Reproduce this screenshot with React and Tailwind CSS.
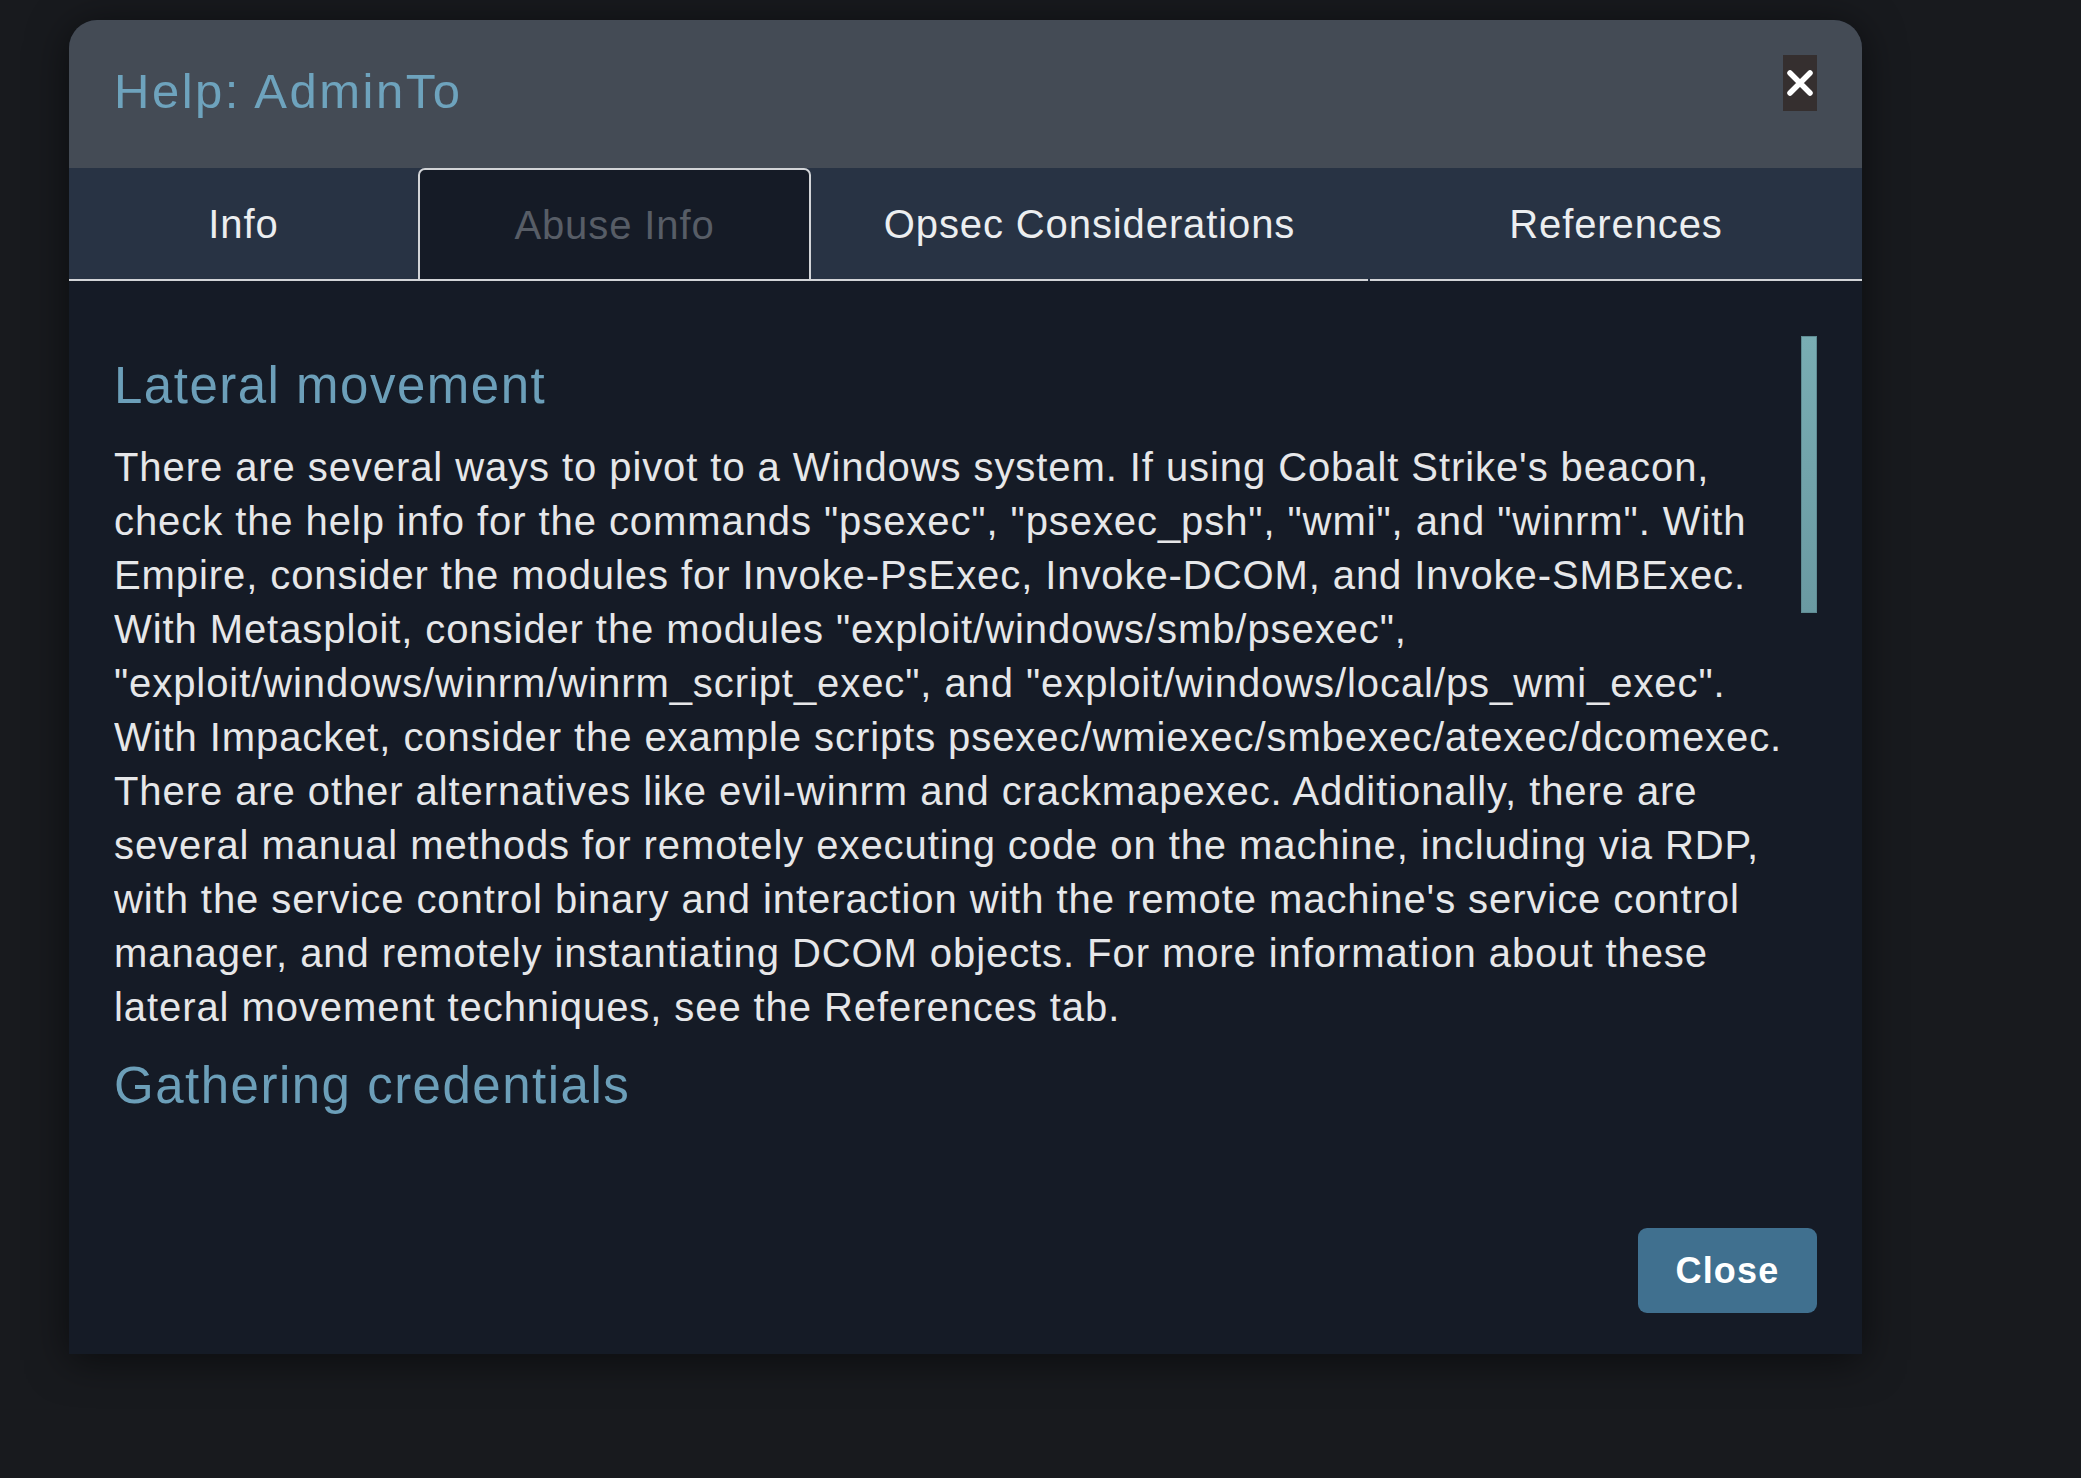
import React, { useState } from 'react'

const tabs = [
  { name: 'Info', w: 'w-[349px]' },
  { name: 'Abuse Info', w: 'w-[393px]' },
  { name: 'Opsec Considerations', w: 'w-[557px]' },
  { name: 'References', w: 'flex-1 ml-[2px]' },
]

const lateral =
  'There are several ways to pivot to a Windows system. If using Cobalt Strike\'s beacon, check the help info for the commands "psexec", "psexec_psh", "wmi", and "winrm". With Empire, consider the modules for Invoke-PsExec, Invoke-DCOM, and Invoke-SMBExec. With Metasploit, consider the modules "exploit/windows/smb/psexec", "exploit/windows/winrm/winrm_script_exec", and "exploit/windows/local/ps_wmi_exec". With Impacket, consider the example scripts psexec/wmiexec/smbexec/atexec/dcomexec. There are other alternatives like evil-winrm and crackmapexec. Additionally, there are several manual methods for remotely executing code on the machine, including via RDP, with the service control binary and interaction with the remote machine\'s service control manager, and remotely instantiating DCOM objects. For more information about these lateral movement techniques, see the References tab.'

export default function App() {
  const [active, setActive] = useState('Abuse Info')

  return (
    <div className="min-h-screen bg-[#181a1e] pl-[69px] pt-[20px] font-['Liberation_Sans',Arial,sans-serif]">
      <div className="w-[1793px] h-[1334px] flex flex-col rounded-t-[28px] bg-[#151b26] overflow-hidden shadow-[0_6px_40px_rgba(0,0,0,0.55)]">
        {/* header */}
        <div className="h-[148px] shrink-0 bg-[#444b55] flex justify-between pl-[45px] pr-[45px]">
          <h4 className="self-center pb-[4px] text-[49px] tracking-[2.5px] text-[#6ea3bd]">Help: AdminTo</h4>
          <button className="mt-[35px] w-[34px] h-[56px] bg-[#352f2f] flex items-center justify-center">
            <svg width="30" height="28" viewBox="0 0 30 28">
              <path d="M5 4 L25 24 M25 4 L5 24" stroke="#fff" strokeWidth="5.5" strokeLinecap="round" />
            </svg>
          </button>
        </div>

        {/* tabs */}
        <div className="h-[113px] shrink-0 bg-[#283344] flex">
          {tabs.map(t => (
            <button
              key={t.name}
              onClick={() => setActive(t.name)}
              className={
                t.name === active
                  ? `${t.w} flex items-center justify-center border-2 border-[#d2d4d7] rounded-t-[7px] bg-[#151b26] text-[40px] tracking-[0.9px] text-[#575d66]`
                  : `${t.w} flex items-center justify-center border-b-2 border-[#d2d4d7] text-[40px] tracking-[0.9px] text-[#eceef0]`
              }
            >
              {t.name}
            </button>
          ))}
        </div>

        {/* body */}
        <div className="flex-1 flex flex-col px-[45px]">
          <div className="mt-[55px] h-[839px] flex overflow-hidden">
            <div className="flex-1">
              <h4 className="mt-[22px] text-[51px] leading-[55px] tracking-[1.5px] text-[#6c9fb9]">Lateral movement</h4>
              <p className="mt-[27px] text-[40px] leading-[54px] tracking-[0.92px] text-[#e6e7e9]">{lateral}</p>
              <h4 className="mt-[24px] text-[51px] leading-[55px] tracking-[1.5px] text-[#6c9fb9]">Gathering credentials</h4>
            </div>
            <div className="w-[16px] shrink-0">
              <div className="h-[277px] bg-gradient-to-b from-[#79adb3] to-[#6a9aa2] border border-[#5f8c93]" />
            </div>
          </div>
          <div className="flex justify-end pt-[53px]">
            <button className="w-[179px] h-[85px] rounded-[9px] bg-[#40708f] text-white font-bold text-[36px] tracking-[1.2px]">
              Close
            </button>
          </div>
        </div>
      </div>
    </div>
  )
}
